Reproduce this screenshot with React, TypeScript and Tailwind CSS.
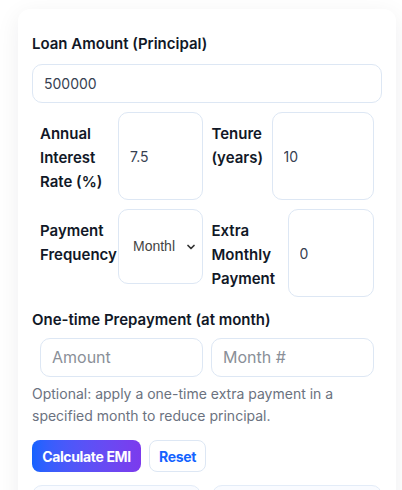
import { ChevronDown } from 'lucide-react';

const label = 'text-[15px] font-semibold leading-6 text-[#111827]';
const field =
  'w-full rounded-[10px] border border-[#dde7f4] bg-white px-[11px] text-[14px] text-[#374151] outline-none placeholder:text-[16px] placeholder:text-[#8a8f98]';

export default function App() {
  return (
    <div className="min-h-[490px] bg-white pt-[9px] font-['Inter',sans-serif]">
      <div className="ml-[18px] w-[378px] rounded-xl bg-white px-[14px] pt-6 pb-6 shadow-[0_6px_24px_rgba(15,23,42,0.07)]">
        {/* Principal */}
        <p className="text-[15px] font-semibold leading-[22px] text-[#111827]">Loan Amount (Principal)</p>
        <input className={`${field} mt-[9px] h-[39px]`} defaultValue="500000" />

        {/* Rate / tenure */}
        <div className="mt-[9px] grid grid-cols-2 gap-[9px] px-2">
          <div className="flex">
            <span className={`${label} w-[78px] shrink-0 pt-[10px]`}>Annual Interest Rate (%)</span>
            <input className={`${field} h-[88px] min-w-0 flex-1`} defaultValue="7.5" />
          </div>
          <div className="flex">
            <span className={`${label} w-[60px] shrink-0 pt-[10px]`}>Tenure (years)</span>
            <input className={`${field} h-[88px] min-w-0 flex-1`} defaultValue="10" />
          </div>
        </div>

        {/* Frequency / extra */}
        <div className="mt-[9px] grid grid-cols-2 gap-[9px] px-2">
          <div className="flex items-start">
            <span className={`${label} w-[78px] shrink-0 whitespace-nowrap pt-[10px]`}>
              Payment
              <br />
              Frequency
            </span>
            <div className="relative flex h-[75px] min-w-0 flex-1 items-center rounded-[10px] border border-[#dde7f4] bg-white pl-[14px] font-['Liberation_Sans',sans-serif] text-[14px] text-[#444]">
              <span className="overflow-hidden whitespace-nowrap pr-6">Monthl</span>
              <ChevronDown className="absolute right-[5px] h-3 w-3 text-[#333]" strokeWidth={3.5} />
            </div>
          </div>
          <div className="flex">
            <span className={`${label} w-[76px] shrink-0 pt-[10px]`}>Extra Monthly Payment</span>
            <input className={`${field} h-[88px] min-w-0 flex-1`} defaultValue="0" />
          </div>
        </div>

        {/* One-time prepayment */}
        <p className="mt-3 text-[15px] font-semibold leading-[22px] text-[#111827]">One-time Prepayment (at month)</p>
        <div className="mt-[7px] grid grid-cols-2 gap-2 px-2">
          <input className={`${field} h-[39px]`} placeholder="Amount" />
          <input className={`${field} h-[39px]`} placeholder="Month #" />
        </div>
        <p className="mt-[6px] text-[14px] leading-[22px] text-[#6b7280]">
          Optional: apply a one-time extra payment in a specified month to reduce principal.
        </p>

        {/* Actions */}
        <div className="mt-[13px] flex gap-2">
          <button className="h-8 w-[109px] rounded-lg bg-gradient-to-r from-[#1463ff] to-[#7c3aed] text-[14px] font-bold tracking-tight text-white">
            Calculate EMI
          </button>
          <button className="h-8 w-[57px] rounded-lg border border-[#dde7f4] bg-white text-[14px] font-bold tracking-tight text-[#1463ff]">
            Reset
          </button>
        </div>

        {/* Results */}
        <div className="mt-[13px] grid grid-cols-[169px_170px] gap-[11px]">
          <div className="h-16 rounded-[10px] border border-[#e3ecf8] bg-[#f9fbff]" />
          <div className="h-16 rounded-[10px] border border-[#e3ecf8] bg-[#f9fbff]" />
        </div>
      </div>
    </div>
  );
}
